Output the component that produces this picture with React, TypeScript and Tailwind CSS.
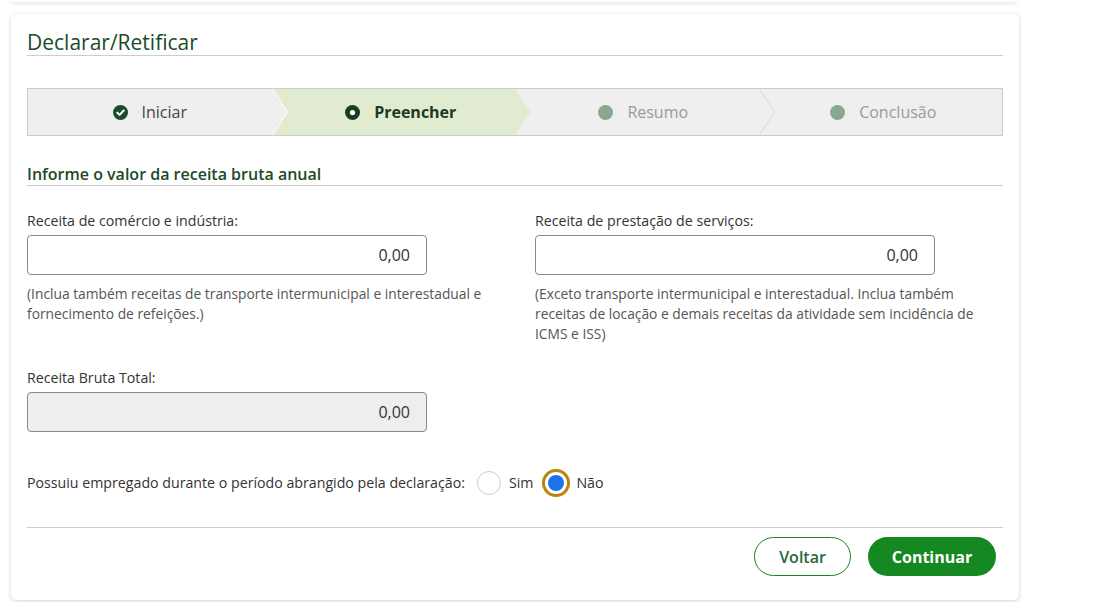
import React from "react";

const F = { fontFamily: "'Open Sans', Lato, sans-serif" };

function Chevron({ fill, line }: { fill: string; line: string }) {
  return (
    <svg
      className="absolute left-full top-0 z-10 h-full"
      width="17"
      viewBox="0 0 17 46"
      preserveAspectRatio="none"
    >
      <polygon points="0,0 15,23 0,46" fill={fill} />
      <polyline points="0.5,0 15.5,23 0.5,46" fill="none" stroke={line} strokeWidth="1.2" />
    </svg>
  );
}

function Step({
  label,
  bg,
  icon,
  textClass,
  chevron,
}: {
  label: string;
  bg: string;
  icon: React.ReactNode;
  textClass: string;
  chevron?: { fill: string; line: string };
}) {
  return (
    <div className={`relative flex min-w-0 items-center justify-center gap-[14px] ${bg}`}>
      {icon}
      <span className={`text-[16px] ${textClass}`}>{label}</span>
      {chevron && <Chevron fill={chevron.fill} line={chevron.line} />}
    </div>
  );
}

export default function App() {
  return (
    <div className="min-h-[602px] w-[1106px] bg-white" style={F}>
      <div className="ml-[11px] h-[2px] w-[1006px] rounded-b-[6px] bg-white shadow-[0_1px_4px_rgba(0,0,0,0.18)]" />
      <div className="ml-[11px] mt-[12px] w-[1008px] rounded-[6px] bg-white px-[16px] pb-[24px] pt-[15px] shadow-[0_1px_4px_rgba(0,0,0,0.18)]">
        <h1 className="border-b border-[#cccccc] text-[21px] leading-[26px] font-normal text-[#1c4b27]">
          Declarar/Retificar
        </h1>

        {/* Stepper */}
        <div className="mt-[32px] grid h-[48px] grid-cols-4 border border-[#cccccc]">
          <Step
            label="Iniciar"
            bg="bg-[#efefef]"
            textClass="text-[#444444]"
            chevron={{ fill: "#efefef", line: "#fafafa" }}
            icon={
              <svg width="15" height="15" viewBox="0 0 16 16">
                <circle cx="8" cy="8" r="8" fill="#1c4b27" />
                <path d="M4.6 8.2 L7 10.5 L11.4 5.9" fill="none" stroke="#fff" strokeWidth="2.2" strokeLinecap="round" strokeLinejoin="round" />
              </svg>
            }
          />
          <Step
            label="Preencher"
            bg="bg-[#e1ebd0] pl-[15px]"
            textClass="font-bold text-[#1c3a22]"
            chevron={{ fill: "#e1ebd0", line: "#e8ecdf" }}
            icon={
              <svg width="15" height="15" viewBox="0 0 16 16">
                <circle cx="8" cy="8" r="8" fill="#1c3a22" />
                <circle cx="8" cy="8" r="2.8" fill="#fff" />
              </svg>
            }
          />
          <Step
            label="Resumo"
            bg="bg-[#efefef] pl-[13px]"
            textClass="text-[#9a9a9a]"
            chevron={{ fill: "#efefef", line: "#e0e0e0" }}
            icon={
              <svg width="15" height="15" viewBox="0 0 16 16">
                <circle cx="8" cy="8" r="8" fill="#8aa68e" />
              </svg>
            }
          />
          <Step
            label="Conclusão"
            bg="bg-[#efefef] pl-[6px]"
            textClass="text-[#9a9a9a]"
            icon={
              <svg width="15" height="15" viewBox="0 0 16 16">
                <circle cx="8" cy="8" r="8" fill="#8aa68e" />
              </svg>
            }
          />
        </div>

        <h2 className="mt-[27px] border-b border-[#cccccc] text-[16px] leading-[22px] font-semibold text-[#1c4b27]">
          Informe o valor da receita bruta anual
        </h2>

        <div className="mt-[25px] grid grid-cols-[508px_1fr]">
          <div>
            <div className="text-[14.2px] leading-[20px] text-[#333333]">Receita de comércio e indústria:</div>
            <div className="mt-[4px] flex h-[40px] w-[400px] items-center justify-end rounded-[4px] border border-[#888888] bg-white pr-[16px] text-[16px] text-[#333333]">
              0,00
            </div>
            <p className="mt-[9px] text-[13.8px] leading-[20px] text-[#555555]">
              (Inclua também receitas de transporte intermunicipal e interestadual e
              <br />
              fornecimento de refeições.)
            </p>
          </div>
          <div>
            <div className="text-[14.2px] leading-[20px] text-[#333333]">Receita de prestação de serviços:</div>
            <div className="mt-[4px] flex h-[40px] w-[400px] items-center justify-end rounded-[4px] border border-[#888888] bg-white pr-[16px] text-[16px] text-[#333333]">
              0,00
            </div>
            <p className="mt-[9px] text-[13.8px] leading-[20px] text-[#555555]">
              (Exceto transporte intermunicipal e interestadual. Inclua também
              <br />
              receitas de locação e demais receitas da atividade sem incidência de
              <br />
              ICMS e ISS)
            </p>
          </div>
        </div>

        <div className="mt-[24px] text-[14.2px] leading-[20px] text-[#333333]">Receita Bruta Total:</div>
        <div className="mt-[4px] flex h-[40px] w-[400px] items-center justify-end rounded-[4px] border border-[#888888] bg-[#eeeeee] pr-[16px] text-[16px] text-[#333333]">
          0,00
        </div>

        <div className="mt-[39px] flex h-[24px] items-center text-[14.2px] text-[#333333]">
          <span>Possuiu empregado durante o período abrangido pela declaração:</span>
          <span className="ml-[12px] h-[24px] w-[24px] rounded-full border border-[#cccccc] bg-white" />
          <span className="ml-[8px]">Sim</span>
          <span className="ml-[9px] flex h-[28px] w-[28px] items-center justify-center rounded-full border-[3px] border-[#b8860b] bg-white">
            <span className="h-[16px] w-[16px] rounded-full bg-[#1a73e8]" />
          </span>
          <span className="ml-[6px]">Não</span>
        </div>

        <div className="mt-[32px] border-t border-[#cccccc]" />

        <div className="mt-[9px] flex justify-end gap-[17px] pr-[7px]">
          <button className="h-[39px] w-[97px] rounded-full border border-[#168821] bg-white text-[16px] font-semibold text-[#2a6a3a]">
            Voltar
          </button>
          <button className="h-[39px] w-[128px] rounded-full bg-[#168821] text-[16px] font-bold text-white">
            Continuar
          </button>
        </div>
      </div>
    </div>
  );
}
